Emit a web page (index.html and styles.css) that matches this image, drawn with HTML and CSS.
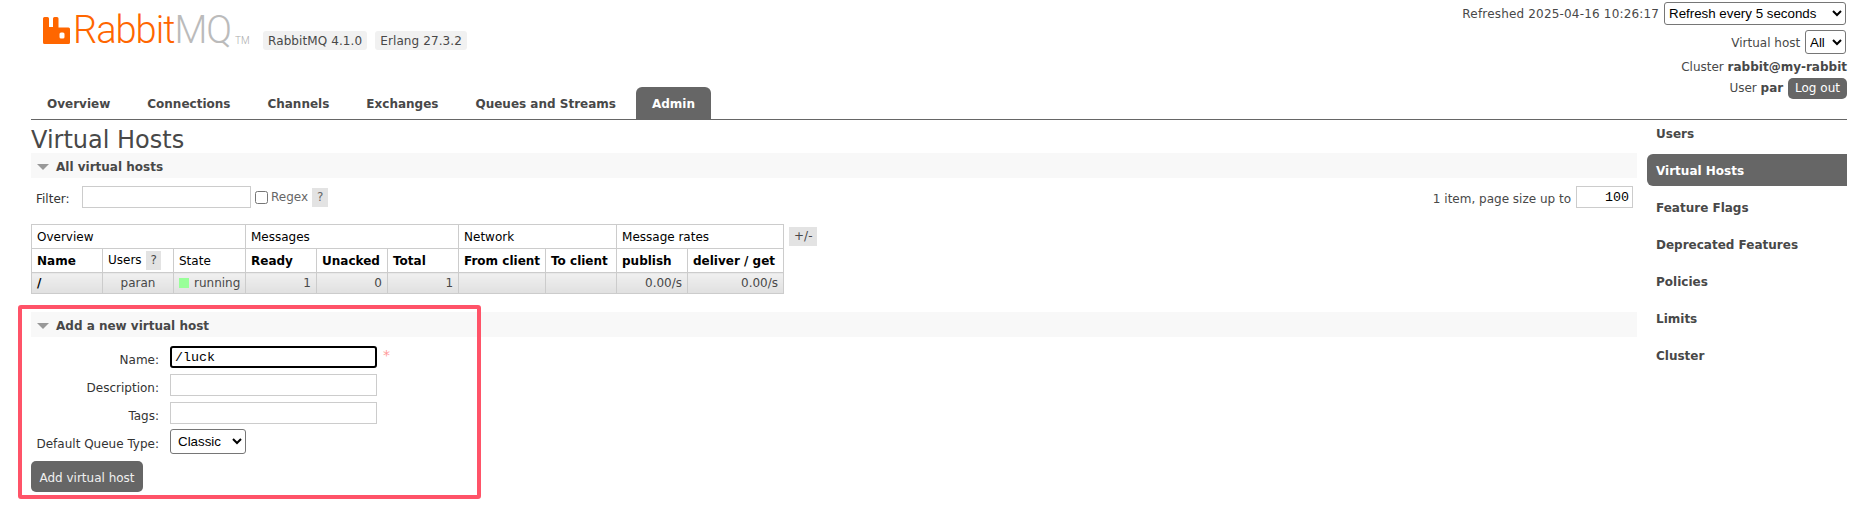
FILE: index.html
```html
<!DOCTYPE html>
<html lang="en">
<head>
	<meta charset="UTF-8">
	<title>RabbitMQ Management</title>
	<link rel="stylesheet" href="styles.css">
</head>
<body>
	<div class="outer">
		<div class="header">
			<div class="logo">
				<svg class="logo-mark" width="27" height="27" viewBox="0 0 27 27">
					<path fill="#f60" d="M0 1.500Q0 0 1.500 0H4.500Q6 0 6 1.500V10H10V1.500Q10 0 11.500 0H14Q15.500 0 15.500 1.500V10.500H25.500Q27 10.500 27 12V25.500Q27 27 25.500 27H1.500Q0 27 0 25.500ZM16.500 17V20Q16.500 21.500 18 21.500H20Q21.500 21.500 21.500 20V17Q21.500 15.500 20 15.500H18Q16.500 15.500 16.500 17Z" fill-rule="evenodd"/>
				</svg>
				<span class="logo-text">Rabbit<span class="logo-mq">MQ</span></span>
				<span class="logo-tm">TM</span>
			</div>
			<span class="version">RabbitMQ 4.1.0</span>
			<span class="version">Erlang 27.3.2</span>
			<ul class="login">
				<li class="row-refresh"><span class="refreshed">Refreshed 2025-04-16 10:26:17</span>
					<select class="top-select refresh-select"><option>Refresh every 5 seconds</option></select>
				</li>
				<li class="row-vhost">Virtual host
					<select class="top-select vhost-select"><option>All</option></select>
				</li>
				<li class="row-text">Cluster <b>rabbit@my-rabbit</b></li>
				<li class="row-user">User <b>par</b> <a href="#" class="btn-logout">Log out</a></li>
			</ul>
		</div>
		<ul class="tabs">
			<li><a href="#" class="tab">Overview</a></li>
			<li><a href="#" class="tab">Connections</a></li>
			<li><a href="#" class="tab">Channels</a></li>
			<li><a href="#" class="tab">Exchanges</a></li>
			<li><a href="#" class="tab">Queues and Streams</a></li>
			<li><a href="#" class="tab selected">Admin</a></li>
		</ul>
		<div class="main">
			<div class="content">
				<h1 class="title">Virtual Hosts</h1>
				<div class="section">
					<h2 class="section-head"><span class="arrow"></span>All virtual hosts</h2>
					<div class="filter-row">
						<label class="filter-label">Filter:</label>
						<input type="text" class="field filter-input">
						<input type="checkbox" class="check">
						<span class="muted">Regex</span>
						<span class="help">?</span>
						<span class="page-size"><span class="page-text">1 item, page size up to</span>
							<input type="text" class="field size-input" value="100">
						</span>
					</div>
					<div class="table-row">
						<table class="list">
							<colgroup>
								<col class="col-std"><col class="col-std"><col class="col-state">
								<col class="col-std"><col class="col-std"><col class="col-std">
								<col class="col-from"><col class="col-std">
								<col class="col-std"><col class="col-del">
							</colgroup>
							<tr class="group">
								<th colspan="3">Overview</th>
								<th colspan="3">Messages</th>
								<th colspan="2">Network</th>
								<th colspan="2">Message rates</th>
							</tr>
							<tr class="heads">
								<th class="strong">Name</th>
								<th>Users <span class="help">?</span></th>
								<th>State</th>
								<th class="strong">Ready</th>
								<th class="strong">Unacked</th>
								<th class="strong">Total</th>
								<th class="strong">From client</th>
								<th class="strong">To client</th>
								<th class="strong">publish</th>
								<th class="strong">deliver / get</th>
							</tr>
							<tr class="data">
								<td class="vhost">/</td>
								<td class="center">paran</td>
								<td class="state"><span class="state-dot"></span>running</td>
								<td>1</td>
								<td>0</td>
								<td>1</td>
								<td></td>
								<td></td>
								<td>0.00/s</td>
								<td>0.00/s</td>
							</tr>
						</table>
						<span class="plus-minus">+/-</span>
					</div>
				</div>
				<div class="section">
					<h2 class="section-head"><span class="arrow"></span>Add a new virtual host</h2>
					<div class="form">
						<label class="form-label">Name:</label>
						<div class="form-cell">
							<input type="text" class="field name-input" value="/luck">
							<span class="star">*</span>
						</div>
						<label class="form-label">Description:</label>
						<div class="form-cell"><input type="text" class="field wide-input"></div>
						<label class="form-label">Tags:</label>
						<div class="form-cell"><input type="text" class="field wide-input"></div>
						<label class="form-label label-select">Default Queue Type:</label>
						<div class="form-cell"><select class="type-select"><option>Classic</option></select></div>
					</div>
					<button class="btn-add">Add virtual host</button>
				</div>
			</div>
			<ul class="side">
				<li><a href="#" class="side-link">Users</a></li>
				<li><a href="#" class="side-link selected">Virtual Hosts</a></li>
				<li><a href="#" class="side-link">Feature Flags</a></li>
				<li><a href="#" class="side-link">Deprecated Features</a></li>
				<li><a href="#" class="side-link">Policies</a></li>
				<li><a href="#" class="side-link">Limits</a></li>
				<li><a href="#" class="side-link">Cluster</a></li>
			</ul>
		</div>
	</div>
	<div class="annotation"></div>
</body>
</html>
```

FILE: styles.css
```css
*{ box-sizing: border-box; }
body{
	margin: 0; background: #fff; color: #484848;
	font-family: "DejaVu Sans", Verdana, sans-serif; font-size: 12px;
}
ul{ list-style: none; margin: 0; padding: 0; }
a{ text-decoration: none; color: #484848; }

.outer{ margin: 0 9px 0 31px; }

/* header */
.header{ height: 87px; display: flex; align-items: flex-start; }
.logo{ width: 220px; margin-left: 12px; margin-top: 17px; height: 27px; display: flex; align-items: flex-end; flex: none; }
.logo-mark{ flex: none; }
.logo-text{
	font-family: Roboto, "Open Sans", sans-serif; font-weight: 300; font-size: 38px; letter-spacing: -1px;
	line-height: 27px; color: #f60; margin-left: 3px; height: 27px;
}
.logo-mq{ color: #bbb; }
.logo-tm{ font-family: Roboto, sans-serif; font-weight: 300; font-size: 10px; line-height: 7px; color: #aaa; margin-left: 4px; }
.version{
	background: #f1f1f1; border-radius: 3px; padding: 0 5px; margin-top: 31px; margin-right: 8px;
	height: 19px; line-height: 20px; letter-spacing: .1px;
}
.login{ margin-left: auto; display: flex; flex-direction: column; align-items: flex-end; padding-top: 2px; }
.login li{ white-space: nowrap; }
.refreshed{ letter-spacing: .18px; }
.top-select{
	font-family: "Liberation Sans", Arial, sans-serif; font-size: 13.33px; color: #000;
	background: #fff; border: 1px solid #767676; border-radius: 3px; height: 23px;
	margin-left: 1px; margin-right: 1px;
}
.refresh-select{ width: 182px; }
.vhost-select{ height: 24px; width: 41px; }
.login .row-vhost{ margin-top: 5px; }
.login .row-text{ height: 17px; line-height: 19px; margin-top: 4px; }
.login .row-user{ height: 21px; line-height: 21px; margin-top: 3px; }
.btn-logout{
	display: inline-block; background: #666; color: #fff; border-radius: 5px;
	width: 59px; text-align: center; height: 21px; line-height: 21px; margin-left: 1px;
}

/* tabs */
.tabs{ display: flex; height: 33px; border-bottom: 1px solid #666; gap: 5px; }
.tab{
	display: block; height: 32px; padding: 0 16px; line-height: 34px; font-weight: bold;
	border-radius: 6px 6px 0 0;
}
.tab.selected{ background: #666; color: #fff; margin-left: -1px; }

/* page */
.main{ display: flex; align-items: flex-start; }
.content{ width: 1606px; flex: none; }
.title{ font-size: 24px; font-weight: normal; line-height: 40px; margin: 0; height: 33px; }
.section-head{
	background: #f8f8f8; height: 25px; margin: 0; font-size: 12px; padding-top: 2px;
	font-weight: bold; padding-left: 6px; display: flex; align-items: center;
}
.arrow{
	width: 0; height: 0; margin-right: 7px; border: 6px solid transparent;
	border-top: 6px solid #999; border-bottom: 0;
}
.filter-row{ display: flex; align-items: center; height: 22px; margin: 8px 0 0 5px; }
.filter-label{ color: #333; width: 46px; flex: none; padding-top: 4px; }
.field{
	border: 1px solid #ccc; border-radius: 0; background: #fff; height: 22px; padding: 0 3px;
	font-family: "Liberation Mono", monospace; font-size: 13.33px; color: #000; outline: 0; margin: 0;
}
.filter-input{ width: 169px; }
.check{ width: 13px; height: 13px; margin: 0 3px 0 4px; }
.muted{ color: #666; }
.help{
	display: inline-block; background: #e3e3e3; color: #666; padding: 0 5px; height: 19px;
	line-height: 19px; font-weight: normal; margin-left: 4px;
}
.page-size{ margin-left: auto; margin-right: 4px; display: flex; align-items: center; gap: 5px; }
.page-text{ padding-top: 4px; }
.size-input{ width: 57px; text-align: right; }

.table-row{ display: flex; align-items: flex-start; margin-top: 16px; }
.list{ border-collapse: collapse; table-layout: fixed; width: 752px; color: #000; }
.col-std{ width: 71px; }
.col-state{ width: 72px; }
.col-from{ width: 87px; }
.col-del{ width: 96px; }
.list th, .list td{ border: 1px solid #ccc; padding: 0 5px; white-space: nowrap; overflow: hidden; }
.list th{ font-weight: normal; text-align: left; height: 24px; }
.list .strong{ font-weight: bold; }
.list .data td{
	height: 21px; text-align: right; color: #484848;
	background: linear-gradient(#f0f0f0, #e0e0e0);
}
.list .data .vhost{ text-align: left; font-weight: bold; color: #000; }
.list .data .center{ text-align: center; }
.list .data .state{ text-align: left; }
.list .help{ margin-left: 1px; padding: 0 4px; color: #484848; }
.state-dot{
	display: inline-block; width: 10px; height: 10px; background: #9f9; margin-right: 5px; vertical-align: -1px;
}
.plus-minus{
	background: #e3e3e3; color: #484848; height: 19px; line-height: 19px; padding: 0 5px;
	margin: 3px 0 0 5px;
}

.section + .section{ margin-top: 18px; }
.form{ display: grid; grid-template-columns: 128px auto; column-gap: 11px; margin-top: 9px; justify-content: start; }
.form-label{ text-align: right; color: #333; align-self: center; }
.label-select{ padding-bottom: 3px; }
.form-cell{ display: flex; align-items: flex-start; margin-bottom: 6px; }
.wide-input{ width: 207px; }
.name-input{ width: 207px; border: 2px solid #000; border-radius: 3px; }
.star{ color: #f99; margin-left: 6px; font-size: 14px; line-height: 18px; }
.type-select{
	font-family: "Liberation Sans", Arial, sans-serif; font-size: 13.33px; color: #000;
	background: #fff; border: 1px solid #767676; border-radius: 3px; height: 25px; width: 76px;
	padding-left: 3px; margin-top: -1px;
}
.btn-add{
	display: block; margin-top: 1px; background: #666; color: #f0f0f0; border: 0; border-radius: 5px;
	width: 112px; height: 31px; font-family: "DejaVu Sans", sans-serif; font-size: 12px; padding: 2px 0 0;
}

/* side menu */
.side{ flex: 1; margin-left: 10px; }
.side-link{
	display: block; height: 32px; line-height: 34px; padding-left: 9px; font-weight: bold;
	border-radius: 6px 0 0 6px; margin-bottom: 5px;
}
.side li:first-child{ margin-top: -3px; }
.side-link.selected{ background: #666; color: #fff; }

/* red mark drawn over the screenshot */
.annotation{
	position: absolute; left: 18px; top: 305px; width: 463px; height: 194px;
	border: 4px solid #ff5368; border-radius: 3px; pointer-events: none;
}
```
